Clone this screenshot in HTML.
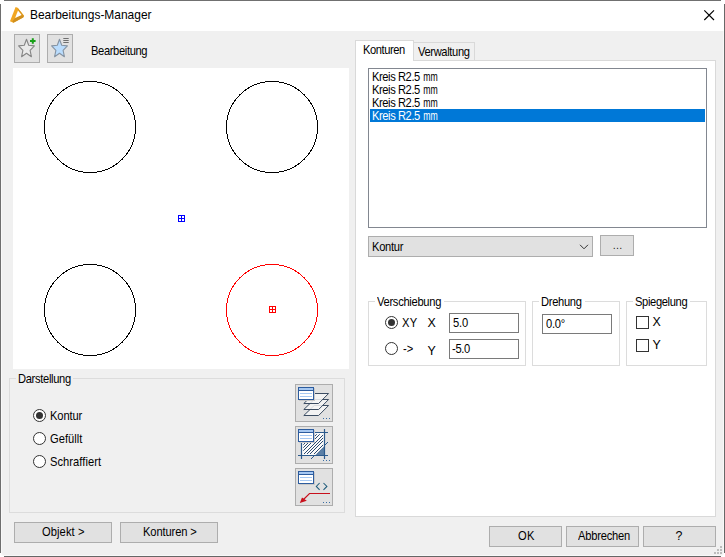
<!DOCTYPE html>
<html lang="de"><head><meta charset="utf-8"><title>Bearbeitungs-Manager</title>
<style>
html,body{margin:0;padding:0;background:#fff}
body{width:725px;height:557px;position:relative;overflow:hidden;font-family:"Liberation Sans",sans-serif;font-size:11px;color:#000}
body *{box-sizing:border-box}
.a{position:absolute}
.t{position:absolute;white-space:pre;line-height:1;transform-origin:0 0;font-family:"Liberation Sans",sans-serif}
.btn{position:absolute;background:#e1e1e1;border:1px solid #adadad}
.grp{position:absolute;border:1px solid #dcdcdc}
.gl{position:absolute;height:3px}
.tb{position:absolute;background:#fff;border:1px solid #7a7a7a}
.rad{position:absolute;width:13px;height:13px;border:1px solid #333;border-radius:50%;background:#fff}
.rad.on::after{content:"";position:absolute;left:2px;top:2px;width:7px;height:7px;border-radius:50%;background:#333}
.chk{position:absolute;width:13px;height:13px;border:1px solid #333;background:#fff}
svg{position:absolute;overflow:visible}
.w{display:inline-block;transform-origin:0 0;transform:scaleX(.78);margin-left:1.3px;letter-spacing:0}

</style></head>
<body>
<!-- window frame -->
<div class="a" style="left:4px;top:0;width:717px;height:1px;background:#707070"></div>
<div class="a" style="left:0;top:4px;width:1px;height:549px;background:#6e6e6e"></div>
<div class="a" style="left:724px;top:4px;width:1px;height:549px;background:#686868"></div>
<div class="a" style="left:4px;top:556px;width:717px;height:1px;background:#666"></div>
<div class="a" style="left:1px;top:1px;width:723px;height:555px;background:#fff"></div>
<div class="a" style="left:1px;top:31px;width:723px;height:525px;background:#f8f8f8;border-radius:0 0 3px 3px"></div>
<div class="a" style="left:2px;top:31px;width:721px;height:524px;background:#f0f0f0;border-radius:0 0 2px 2px"></div>
<!-- title icon -->
<svg style="left:0;top:0" width="40" height="31" viewBox="0 0 40 31">
<polygon points="15.6,7 17.6,7.8 24,15.8 23.2,17.4 13.4,22.8 10,21.2" fill="#f2a621"/>
<polygon points="15.2,18 21.4,15 24,15.8 23.2,17.4 13.4,22.8 12.4,21.4" fill="#cf8f1f"/>
<polygon points="17.6,7.8 24,15.8 21.6,15.2 18,10.4" fill="#dc981e"/><polygon points="18,10.4 21.6,15.1 15.1,18.1" fill="#fff"/>
</svg>
<!-- close -->
<svg style="left:700px;top:6px" width="20" height="20" viewBox="0 0 20 20"><path d="M4.3 4.3 L14 14 M14 4.3 L4.3 14" stroke="#000" stroke-width="1.15" fill="none"/></svg>
<!-- toolbar -->
<div class="btn" style="left:14px;top:34px;width:26px;height:29px"></div>
<div class="btn" style="left:47px;top:34px;width:26px;height:29px"></div>
<svg style="left:14px;top:34px" width="26" height="29" viewBox="0 0 26 29">
<polygon points="12.5,5.3 14.7,11.3 20.4,11.9 16.1,16.3 17.4,22.7 12.5,19.3 7.6,22.7 8.9,16.3 4.6,11.9 10.3,11.3" fill="#eaeaea" stroke="#858585" stroke-width="1.1" stroke-linejoin="round"/>
<path d="M18.8 4.2 V9.8 M16 7 H21.6" stroke="#18a018" stroke-width="2" fill="none"/>
</svg>
<svg style="left:47px;top:34px" width="26" height="29" viewBox="0 0 26 29">
<polygon points="12.5,5.3 14.7,11.3 20.4,11.9 16.1,16.3 17.4,22.7 12.5,19.3 7.6,22.7 8.9,16.3 4.6,11.9 10.3,11.3" fill="#b9dcfd" stroke="#8593a2" stroke-width="1.1" stroke-linejoin="round"/>
<path d="M16.3 4.5 H21.7 M16.3 6.5 H21.7 M16.3 8.5 H21.7" stroke="#6e6e6e" stroke-width="1" fill="none"/>
</svg>
<!-- canvas -->
<div class="a" style="left:13px;top:68px;width:336px;height:301px;background:#fff"></div>
<svg style="left:13px;top:68px" width="336" height="301" viewBox="13 68 336 301" shape-rendering="crispEdges">
<g fill="none" stroke="#000" stroke-width="1">
<circle cx="90" cy="127" r="45.5"/><circle cx="272" cy="127" r="45.5"/><circle cx="90" cy="310" r="45.5"/>
</g>
<circle cx="272" cy="310" r="45.5" fill="none" stroke="#f00" stroke-width="1"/>
<g fill="none" stroke="#00f" stroke-width="1"><rect x="178.5" y="215.5" width="6" height="6"/><path d="M181.5 215.5 V221.5 M178.5 218.5 H184.5"/></g>
<g fill="none" stroke="#f00" stroke-width="1"><rect x="269.5" y="306.5" width="6" height="6"/><path d="M272.5 306.5 V312.5 M269.5 309.5 H275.5"/></g>
</svg>
<!-- group Darstellung -->
<div class="grp" style="left:9px;top:378px;width:336px;height:135px"></div>
<div class="gl" style="left:16px;top:377px;width:57px;background:#f0f0f0"></div>
<div class="rad on" style="left:33px;top:409px"></div>
<div class="rad" style="left:33px;top:432px"></div>
<div class="rad" style="left:33px;top:455px"></div>
<div class="btn" style="left:295px;top:384px;width:38px;height:38px"></div>
<div class="btn" style="left:295px;top:426px;width:38px;height:38px"></div>
<div class="btn" style="left:295px;top:468px;width:38px;height:38px"></div>
<svg style="left:0;top:0" width="725" height="557" viewBox="0 0 725 557">
<polygon points="314.2,405.5 328.6,405.5 318.6,415.5 303.8,415.5" fill="#f6f6f6" fill-opacity=".85" stroke="#3c4d63" stroke-width="1" stroke-linejoin="miter"/><polygon points="314.2,399.5 328.6,399.5 318.6,409.5 303.8,409.5" fill="#f6f6f6" fill-opacity=".85" stroke="#3c4d63" stroke-width="1" stroke-linejoin="miter"/><polygon points="314.2,393.5 328.6,393.5 318.6,403.5 303.8,403.5" fill="#f6f6f6" fill-opacity=".85" stroke="#3c4d63" stroke-width="1" stroke-linejoin="miter"/><g shape-rendering="crispEdges"><rect x="299" y="388" width="16" height="13" fill="#c9c9c9"/><rect x="298" y="387" width="16" height="13" fill="#2d5c9e"/><rect x="299" y="388" width="14" height="2" fill="#a6c8f2"/><rect x="299" y="391" width="14" height="8" fill="#fff"/><rect x="300" y="393" width="12" height="1" fill="#a6c8f2"/><rect x="300" y="396" width="12" height="1" fill="#a6c8f2"/></g><g shape-rendering="crispEdges" fill="#3a6ea5"><rect x="323" y="418" width="1" height="1"/><rect x="326" y="418" width="1" height="1"/><rect x="329" y="418" width="1" height="1"/></g>
<defs><clipPath id="sq"><rect x="303.3" y="434.2" width="19.8" height="19.8"/></clipPath></defs><rect x="302" y="433" width="22" height="22" fill="#fafafa"/><path d="M282 456 L306 432 M285 456 L309 432 M288 456 L312 432 M292 456 L316 432 M295 456 L319 432 M298 456 L322 432 M302 456 L326 432 M305 456 L329 432 M308 456 L332 432 M312 456 L336 432 M315 456 L339 432 M318 456 L342 432 M322 456 L346 432 M325 456 L349 432 M328 456 L352 432 M332 456 L356 432 " stroke="#2b4a6f" stroke-width="1" fill="none" clip-path="url(#sq)"/><polygon points="324.5,446 324.5,455.5 315,455.5" fill="#5b7fa6"/><path d="M301.5 442 V459 M324.5 429 V459 M298 455.5 H328 M314 432.5 H328 " stroke="#2c5a8c" stroke-width="1.2" fill="none"/><path d="M311 459 L314 456 M325 445 L328 442" stroke="#2c5a8c" stroke-width="1" fill="none"/><g shape-rendering="crispEdges"><rect x="299" y="430" width="16" height="13" fill="#c9c9c9"/><rect x="298" y="429" width="16" height="13" fill="#2d5c9e"/><rect x="299" y="430" width="14" height="2" fill="#a6c8f2"/><rect x="299" y="433" width="14" height="8" fill="#fff"/><rect x="300" y="435" width="12" height="1" fill="#a6c8f2"/><rect x="300" y="438" width="12" height="1" fill="#a6c8f2"/></g><g shape-rendering="crispEdges" fill="#3a6ea5"><rect x="323" y="460" width="1" height="1"/><rect x="326" y="460" width="1" height="1"/><rect x="329" y="460" width="1" height="1"/></g>
<path d="M319.6 483 L316.3 486.4 L319.6 489.8 M323.5 483 L326.9 486.4 L323.5 489.8" stroke="#1d5a7a" stroke-width="1.05" fill="none"/><path d="M330 493.5 H309.5 L302.5 500.5" stroke="#c8101c" stroke-width="1.2" fill="none"/><polygon points="299.8,503 302,497.6 306.8,500.8" fill="#c8101c"/><g shape-rendering="crispEdges"><rect x="299" y="472" width="16" height="13" fill="#c9c9c9"/><rect x="298" y="471" width="16" height="13" fill="#2d5c9e"/><rect x="299" y="472" width="14" height="2" fill="#a6c8f2"/><rect x="299" y="475" width="14" height="8" fill="#fff"/><rect x="300" y="477" width="12" height="1" fill="#a6c8f2"/><rect x="300" y="480" width="12" height="1" fill="#a6c8f2"/></g><g shape-rendering="crispEdges" fill="#3a6ea5"><rect x="323" y="502" width="1" height="1"/><rect x="326" y="502" width="1" height="1"/><rect x="329" y="502" width="1" height="1"/></g>
</svg>
<!-- bottom buttons -->
<div class="btn" style="left:14px;top:522px;width:98px;height:21px"></div>
<div class="btn" style="left:120px;top:522px;width:98px;height:21px"></div>
<div class="btn" style="left:489px;top:526px;width:73px;height:21px"></div>
<div class="btn" style="left:566px;top:526px;width:73px;height:21px"></div>
<div class="btn" style="left:643px;top:526px;width:73px;height:21px"></div>
<!-- tab control -->
<div class="a" style="left:355px;top:60px;width:361px;height:457px;background:#fff;border:1px solid #d9d9d9"></div>
<div class="a" style="left:413px;top:42px;width:62px;height:19px;background:#f0f0f0;border:1px solid #d9d9d9"></div>
<div class="a" style="left:355px;top:40px;width:59px;height:21px;background:#fff;border:1px solid #d9d9d9;border-bottom:0"></div>
<!-- listbox -->
<div class="tb" style="left:368px;top:68px;width:339px;height:160px;border-color:#828790"></div>
<div class="a" style="left:370px;top:109px;width:335px;height:13px;background:#0078d7"></div>
<!-- combo -->
<div class="btn" style="left:368px;top:236px;width:225px;height:21px"></div>
<svg style="left:578px;top:242px" width="12" height="10" viewBox="0 0 12 10"><path d="M2 2.8 L6 6.8 L10 2.8" stroke="#333" stroke-width="1" fill="none"/></svg>
<div class="btn" style="left:600px;top:235px;width:34px;height:21px"></div>
<!-- groups -->
<div class="grp" style="left:368px;top:301px;width:158px;height:65px"></div>
<div class="gl" style="left:375px;top:300px;width:69px;background:#fff"></div>
<div class="grp" style="left:532px;top:301px;width:88px;height:65px"></div>
<div class="gl" style="left:539px;top:300px;width:46px;background:#fff"></div>
<div class="grp" style="left:626px;top:301px;width:81px;height:65px"></div>
<div class="gl" style="left:633px;top:300px;width:57px;background:#fff"></div>
<div class="rad on" style="left:385px;top:316px"></div>
<div class="rad" style="left:385px;top:342px"></div>
<div class="tb" style="left:449px;top:313px;width:70px;height:20px"></div>
<div class="tb" style="left:449px;top:339px;width:70px;height:20px"></div>
<div class="tb" style="left:542px;top:314px;width:70px;height:20px"></div>
<div class="chk" style="left:636px;top:316px"></div>
<div class="chk" style="left:636px;top:339px"></div>
<!-- grip -->
<svg style="left:711px;top:543px" width="12" height="12" viewBox="0 0 12 12" shape-rendering="crispEdges"><g fill="#bcbcbc"><rect x="9" y="3" width="2" height="2"/><rect x="6" y="6" width="2" height="2"/><rect x="9" y="6" width="2" height="2"/><rect x="3" y="9" width="2" height="2"/><rect x="6" y="9" width="2" height="2"/><rect x="9" y="9" width="2" height="2"/></g></svg>

<span id="title" class="t" style="left:30.00px;top:9.33px;font-size:12.6px;letter-spacing:-0.011px;color:#000;transform:scaleX(0.950)">Bearbeitungs-Manager</span>
<span id="lbl" class="t" style="left:90.50px;top:44.50px;font-size:12.4px;letter-spacing:-0.400px;color:#000;transform:scaleX(0.900)">Bearbeitung</span>
<span id="gdar" class="t" style="left:18.00px;top:372.50px;font-size:12.4px;letter-spacing:-0.356px;color:#000;transform:scaleX(0.900)">Darstellung</span>
<span id="r1" class="t" style="left:50.00px;top:409.50px;font-size:12.4px;letter-spacing:-0.133px;color:#000;transform:scaleX(0.900)">Kontur</span>
<span id="r2" class="t" style="left:50.00px;top:432.50px;font-size:12.4px;letter-spacing:-0.000px;color:#000;transform:scaleX(0.900)">Gefüllt</span>
<span id="r3" class="t" style="left:50.00px;top:455.50px;font-size:12.4px;letter-spacing:0.044px;color:#000;transform:scaleX(0.900)">Schraffiert</span>
<span id="b1" class="t" style="left:42.00px;top:525.50px;font-size:12.4px;letter-spacing:0.095px;color:#000;transform:scaleX(0.900)">Objekt &gt;</span>
<span id="b2" class="t" style="left:142.50px;top:525.50px;font-size:12.4px;letter-spacing:-0.123px;color:#000;transform:scaleX(0.900)">Konturen &gt;</span>
<span id="t1" class="t" style="left:362.50px;top:43.50px;font-size:12.4px;letter-spacing:-0.476px;color:#000;transform:scaleX(0.900)">Konturen</span>
<span id="t2" class="t" style="left:418.00px;top:45.50px;font-size:12.4px;letter-spacing:-0.395px;color:#000;transform:scaleX(0.900)">Verwaltung</span>
<span id="l1" class="t" style="left:372.00px;top:70.50px;font-size:12.4px;letter-spacing:-0.469px;color:#000;transform:scaleX(0.900)">Kreis R2.5 <span class="w">mm</span></span>
<span id="l2" class="t" style="left:372.00px;top:83.50px;font-size:12.4px;letter-spacing:-0.469px;color:#000;transform:scaleX(0.900)">Kreis R2.5 <span class="w">mm</span></span>
<span id="l3" class="t" style="left:372.00px;top:96.50px;font-size:12.4px;letter-spacing:-0.469px;color:#000;transform:scaleX(0.900)">Kreis R2.5 <span class="w">mm</span></span>
<span id="l4" class="t" style="left:372.00px;top:109.50px;font-size:12.4px;letter-spacing:-0.469px;color:#fff;transform:scaleX(0.900)">Kreis R2.5 <span class="w">mm</span></span>
<span id="cb" class="t" style="left:372.00px;top:240.50px;font-size:12.4px;letter-spacing:-0.311px;color:#000;transform:scaleX(0.900)">Kontur</span>
<span id="gv" class="t" style="left:377.00px;top:295.50px;font-size:12.4px;letter-spacing:-0.323px;color:#000;transform:scaleX(0.900)">Verschiebung</span>
<span id="gd" class="t" style="left:541.00px;top:295.50px;font-size:12.4px;letter-spacing:-0.333px;color:#000;transform:scaleX(0.900)">Drehung</span>
<span id="gs" class="t" style="left:634.50px;top:295.50px;font-size:12.4px;letter-spacing:-0.395px;color:#000;transform:scaleX(0.900)">Spiegelung</span>
<span id="xy" class="t" style="left:402.00px;top:316.50px;font-size:12.4px;letter-spacing:0.222px;color:#000;transform:scaleX(0.900)">XY</span>
<span id="x" class="t" style="left:427.50px;top:316.50px;font-size:12.4px;letter-spacing:0.000px;color:#000;transform:scaleX(1.000)">X</span>
<span id="v1" class="t" style="left:452.50px;top:316.50px;font-size:12.4px;letter-spacing:-0.222px;color:#000;transform:scaleX(0.900)">5.0</span>
<span id="ar" class="t" style="left:402.50px;top:342.50px;font-size:12.4px;letter-spacing:0.000px;color:#000;transform:scaleX(0.900)">-&gt;</span>
<span id="y" class="t" style="left:427.50px;top:344.50px;font-size:12.4px;letter-spacing:0.000px;color:#000;transform:scaleX(1.000)">Y</span>
<span id="v2" class="t" style="left:452.00px;top:342.50px;font-size:12.4px;letter-spacing:-0.370px;color:#000;transform:scaleX(0.900)">-5.0</span>
<span id="v3" class="t" style="left:545.50px;top:317.50px;font-size:12.4px;letter-spacing:-0.296px;color:#000;transform:scaleX(0.900)">0.0°</span>
<span id="cx" class="t" style="left:652.50px;top:315.50px;font-size:12.4px;letter-spacing:0.000px;color:#000;transform:scaleX(1.000)">X</span>
<span id="cy" class="t" style="left:652.50px;top:338.50px;font-size:12.4px;letter-spacing:0.000px;color:#000;transform:scaleX(1.000)">Y</span>
<span id="ok" class="t" style="left:517.50px;top:529.50px;font-size:12.4px;letter-spacing:0.444px;color:#000;transform:scaleX(0.900)">OK</span>
<span id="ab" class="t" style="left:577.50px;top:529.50px;font-size:12.4px;letter-spacing:-0.250px;color:#000;transform:scaleX(0.900)">Abbrechen</span>
<span id="q" class="t" style="left:675.50px;top:529.50px;font-size:12.4px;letter-spacing:0.000px;color:#000;transform:scaleX(1.000)">?</span>
<span id="dots" class="t" style="left:613.00px;top:240.53px;font-size:10px;letter-spacing:0.889px;color:#000;transform:scaleX(0.900)">...</span>
</body></html>
